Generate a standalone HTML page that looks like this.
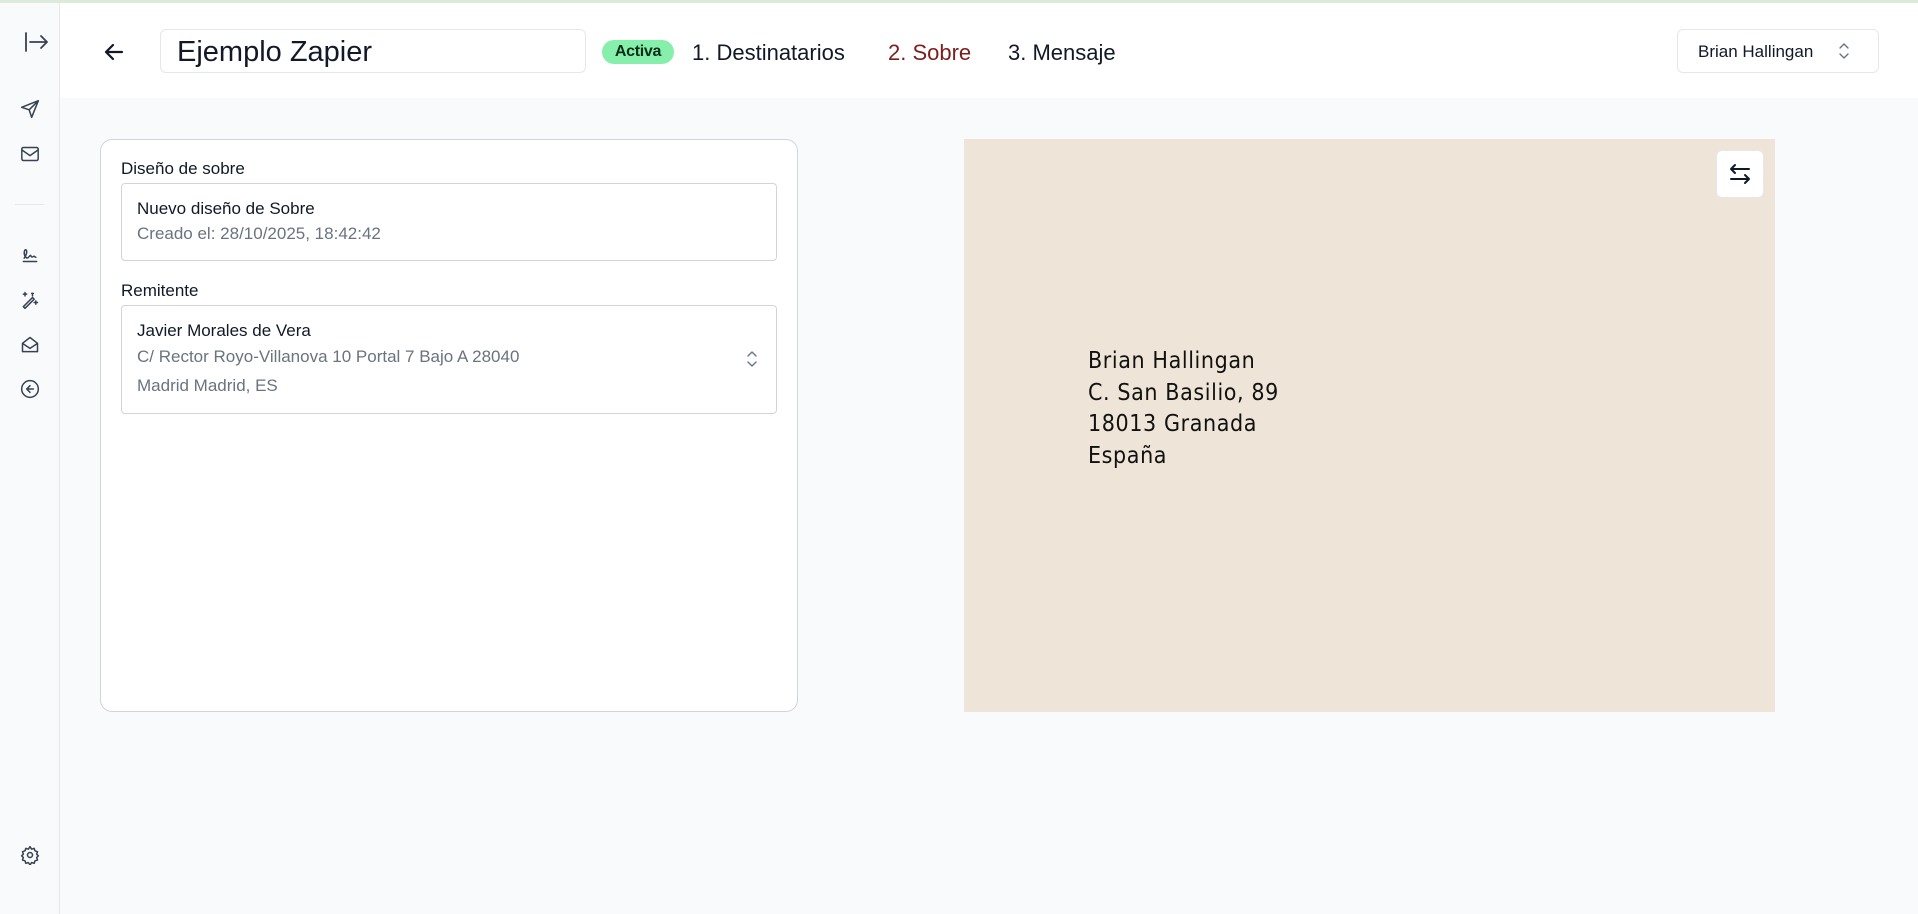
<!DOCTYPE html>
<html><head><meta charset="utf-8"><style>
*{box-sizing:border-box;margin:0;padding:0}
body{width:1918px;height:914px;overflow:hidden;background:#f9fafb;font-family:"Liberation Sans",sans-serif;color:#111827;position:relative}
.abs{position:absolute}
.top{left:0;top:0;width:1918px;height:3px;background:#dcebd8}
.side{left:0;top:3px;width:60px;height:911px;background:#f9fafb;border-right:1px solid #e5e7eb}
.hdr{left:60px;top:3px;width:1858px;height:95px;background:#fff}
svg.i{position:absolute;fill:none;stroke:#374151;stroke-width:1.8;stroke-linecap:round;stroke-linejoin:round}
.title{left:160px;top:29px;width:426px;height:44px;border:1px solid #e5e7eb;border-radius:6px;background:#fff;font-size:29px;padding:6px 16px;color:#111827}
.badge{left:602px;top:40px;width:72px;height:24px;background:#86efac;border-radius:12px;font-size:16px;text-align:center;line-height:24px;color:#052e16;font-weight:bold;letter-spacing:-0.3px}
.step{top:39px;font-size:22px;line-height:28px}
.sel{left:1677px;top:29px;width:202px;height:44px;border:1px solid #e5e7eb;border-radius:6px;background:#fff;font-size:17px;line-height:44px;padding-left:20px}
.card{left:100px;top:139px;width:698px;height:573px;background:#fff;border:1px solid #d1d5db;border-radius:12px}
.lbl{font-size:17px;left:121px}
.box{left:121px;width:656px;border:1px solid #d1d5db;border-radius:4px;background:#fff;padding:0 15px}
.box div{font-size:17px}
.g{color:#6b7280}
.env{left:964px;top:139px;width:811px;height:573px;background:#efe4d8}
.swap{left:1716px;top:150px;width:48px;height:48px;background:#fff;border:1px solid #e5e7eb;border-radius:6px}
.hand{left:1088px;top:346px;font-family:"DejaVu Sans Condensed","DejaVu Sans",sans-serif;font-weight:200;font-size:23px;line-height:31.5px;color:#111;letter-spacing:0.6px}
</style></head><body>
<div class="abs top"></div>
<div class="abs side"></div>
<div class="abs" style="left:15px;top:204px;width:29px;height:1px;background:#e5e7eb"></div>
<svg class="i" style="left:19px;top:30px" width="32" height="24" viewBox="0 0 32 24"><path d="M7 3v18M11 12h17M22 6l6 6-6 6"/></svg>
<svg class="i" style="left:20px;top:99px" width="20" height="20" viewBox="0 0 24 24"><path d="M22 2L2 10l9 3 3 9z M11 13l11-11"/></svg>
<svg class="i" style="left:20px;top:145px" width="20" height="18" viewBox="0 0 24 22"><rect x="2" y="3" width="20" height="16" rx="2"/><path d="M2 6l10 7 10-7"/></svg>
<svg class="i" style="left:20px;top:244px" width="20" height="20" viewBox="0 0 24 24"><path d="M4 21h16M5 17c3-4 4-9 2-10s-3 6 0 9 5-4 6-2 1 2 3 1 2 1 3 1"/></svg>
<svg class="i" style="left:20px;top:290px" width="20" height="20" viewBox="0 0 24 24"><path d="M4 20l11-11 2 2-11 11zM15 5v2M16 4h-2M6 3v4M4 5h4M19 13v4M17 15h4"/></svg>
<svg class="i" style="left:20px;top:335px" width="20" height="20" viewBox="0 0 24 24"><path d="M3 10l9-7 9 7v10H3z M3 10l9 6 9-6"/></svg>
<svg class="i" style="left:20px;top:379px" width="20" height="20" viewBox="0 0 24 24"><circle cx="12" cy="12" r="10"/><path d="M16 12H8M12 8l-4 4 4 4"/></svg>
<svg class="i" style="left:20px;top:845px" width="20" height="20" viewBox="0 0 24 24"><circle cx="12" cy="12" r="3"/><path d="M12 2l2 3 3-1 1 3 3 1-1 3 2 2-2 2 1 3-3 1-1 3-3-1-2 3-2-3-3 1-1-3-3-1 1-3-2-2 2-2-1-3 3-1 1-3 3 1z"/></svg>
<div class="abs hdr"></div>
<svg class="i" style="left:102px;top:40px;stroke:#111827;stroke-width:2.2" width="24" height="24" viewBox="0 0 24 24"><path d="M20 12H4M11 5l-7 7 7 7"/></svg>
<div class="abs title">Ejemplo Zapier</div>
<div class="abs badge">Activa</div>
<div class="abs step" style="left:692px">1. Destinatarios</div>
<div class="abs step" style="left:888px;color:#7f1d1d">2. Sobre</div>
<div class="abs step" style="left:1008px">3. Mensaje</div>
<div class="abs sel">Brian Hallingan</div>
<svg class="i" style="left:1837px;top:41px;stroke:#6b7280;stroke-width:1.4" width="14" height="20" viewBox="0 0 14 20"><path d="M3 7l4-4 4 4M3 13l4 4 4-4"/></svg>
<div class="abs card"></div>
<div class="abs lbl" style="top:159px">Diseño de sobre</div>
<div class="abs box" style="top:183px;height:78px;padding-top:13px"><div style="line-height:24px">Nuevo diseño de Sobre</div><div class="g" style="line-height:26px">Creado el: 28/10/2025, 18:42:42</div></div>
<div class="abs lbl" style="top:281px">Remitente</div>
<div class="abs box" style="top:305px;height:109px;padding-top:12px"><div style="line-height:25px">Javier Morales de Vera</div><div class="g" style="line-height:28px">C/ Rector Royo-Villanova 10 Portal 7 Bajo A 28040</div><div class="g" style="line-height:30px">Madrid Madrid, ES</div></div>
<svg class="i" style="left:745px;top:350px;stroke:#6b7280;stroke-width:1.4" width="14" height="18" viewBox="0 0 14 18"><path d="M3 6l4-4 4 4M3 12l4 4 4-4"/></svg>
<div class="abs env"></div>
<div class="abs swap"></div>
<svg class="i" style="left:1728px;top:162px;stroke:#111827;stroke-width:2" width="24" height="24" viewBox="0 0 24 24"><path d="M21 7H3M7 3L3 7l4 4M3 17h18M17 13l4 4-4 4"/></svg>
<div class="abs hand">Brian Hallingan<br>C. San Basilio, 89<br>18013 Granada<br>España</div>
</body></html>
